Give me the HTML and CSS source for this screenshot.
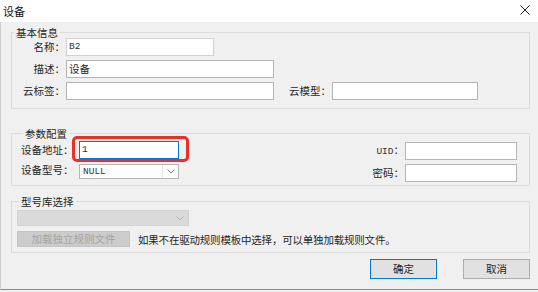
FILE: index.html
```html
<!DOCTYPE html>
<html>
<head>
<meta charset="utf-8">
<link rel="stylesheet" href="styles.css">
</head>
<body>
<div class="window">
  <div class="titlebar">
    <span class="title">设备</span>
    <svg class="close" width="10" height="10" viewBox="0 0 10 10"><path d="M0.5 0.5L9.5 9.5M9.5 0.5L0.5 9.5" stroke="#222" stroke-width="1" fill="none"/></svg>
  </div>
  <div class="content">
    <fieldset class="group g1">
      <legend>基本信息</legend>
      <div class="row">
        <label class="lab l1">名称：</label>
        <div class="input w148 dim"><span class="mono">B2</span></div>
      </div>
      <div class="row">
        <label class="lab l1">描述：</label>
        <div class="input w208">设备</div>
      </div>
      <div class="row">
        <label class="lab l1">云标签：</label>
        <div class="input w208"></div>
        <label class="lab l1b">云模型：</label>
        <div class="input w146"></div>
      </div>
    </fieldset>

    <fieldset class="group g2">
      <legend>参数配置</legend>
      <div class="cols">
        <div class="col left">
          <div class="row">
            <label class="lab l2">设备地址：</label>
            <div class="hl-wrap">
              <div class="input w100 focus"><span class="mono">1</span></div>
              <div class="highlight"></div>
            </div>
          </div>
          <div class="row r2">
            <label class="lab l2">设备型号：</label>
            <div class="select w100"><span class="mono">NULL</span>
              <span class="arrow"><svg width="8" height="5" viewBox="0 0 8 5"><path d="M0.5 0.5L4 4L7.5 0.5" stroke="#777" fill="none"/></svg></span>
            </div>
          </div>
        </div>
        <div class="col right">
          <div class="row">
            <label class="lab l3"><span class="mono">UID</span>：</label>
            <div class="input w112"></div>
          </div>
          <div class="row r2b">
            <label class="lab l3">密码：</label>
            <div class="input w112"></div>
          </div>
        </div>
      </div>
    </fieldset>

    <fieldset class="group g3">
      <legend>型号库选择</legend>
      <div class="select disabled w172">
        <span class="arrow"><svg width="8" height="5" viewBox="0 0 8 5"><path d="M0.5 0.5L4 4L7.5 0.5" stroke="#b5b5b5" fill="none"/></svg></span>
      </div>
      <div class="row r3">
        <div class="btn disabled-btn">加载独立规则文件</div>
        <span class="hint">如果不在驱动规则模板中选择，可以单独加载规则文件。</span>
      </div>
    </fieldset>

    <div class="footer">
      <div class="btn primary">确定</div>
      <div class="btn normal">取消</div>
    </div>
  </div>
</div>
</body>
</html>
```

FILE: styles.css
```css
* { box-sizing: border-box; }
html, body { margin: 0; padding: 0; }
body {
  width: 538px;
  height: 292px;
  background: #f0f0f0;
  font-family: "Noto Sans CJK SC", "Noto Sans", sans-serif;
  font-size: 10.5px;
  color: #262626;
  overflow: hidden;
}
.window {
  width: 538px;
  height: 292px;
  display: flex;
  flex-direction: column;
}
.titlebar {
  height: 22px;
  background: #ffffff;
  display: flex;
  align-items: center;
  justify-content: space-between;
  padding: 0 8px 1px 3px;
  flex: none;
}
.title { font-size: 11px; line-height: 12px; color: #111; }
.close { display: block; margin-top: -2px; }
.content {
  flex: 1;
  border-left: 1px solid #cfcfcf;
  border-bottom: 1px solid #8a8a8a;
  margin-bottom: 2px;
  padding: 0 8px 0 10px;
  display: flex;
  flex-direction: column;
}
.group {
  margin: 0;
  border: 1px solid #dcdcdc;
  padding: 0;
  min-width: 0;
}
.group legend {
  font-size: 10.5px;
  line-height: 11px;
  padding: 0 2px;
  margin-left: 2px;
}
.g1 { margin-top: 5px; padding: 0 0 8px 0; }
.g2 { margin-top: 19px; padding: 2px 12px 3px 9px; }
.g3 { margin-top: 10px; padding: 3px 0 5px 5px; }
.row {
  display: flex;
  align-items: center;
  height: 18px;
}
.g1 .row + .row { margin-top: 4px; }
.lab { white-space: nowrap; line-height: 12px; }
.l1 { width: 53px; text-align: right; margin-right: 1px; }
.l1b { width: 57px; text-align: right; margin-right: 1px; }
.l2 { width: 58px; }
.l3 { width: 42px; text-align: right; margin-right: 1px; }
.input {
  height: 18px;
  background: #fff;
  border: 1px solid #b5b5b5;
  padding: 0 2px;
  display: flex;
  align-items: center;
  line-height: 12px;
}
.input.dim { border-color: #d2d2d2; }
.input.focus { border-color: #0078d7; }
.mono { font-family: "Liberation Mono", "DejaVu Sans Mono", monospace; font-size: 9.5px; font-weight: normal; color: #333; }
.w100 { width: 100px; }
.w112 { width: 112px; }
.w146 { width: 146px; }
.w148 { width: 148px; }
.w172 { width: 172px; }
.w208 { width: 208px; }
.cols { display: flex; justify-content: space-between; }
.r2 { margin-top: 5px; align-items: flex-start; }
.r2b { margin-top: 4px; }
.right .row:first-child { margin-top: 1px; }
.hl-wrap { position: relative; }
.highlight {
  position: absolute;
  left: -7px;
  right: -10px;
  top: -5px;
  bottom: -3px;
  border: 3px solid #e8302a;
  border-radius: 5px;
}
.select {
  height: 15px;
  background: #fff;
  border: 1px solid #b5b5b5;
  display: flex;
  align-items: center;
  padding-left: 3px;
}
.select .arrow {
  margin-left: auto;
  width: 16px;
  height: 13px;
  display: flex;
  align-items: center;
  justify-content: center;
  border-left: 1px solid #e6e6e6;
}
.select.disabled {
  height: 16px;
  background: #dadada;
  border-color: #d2d2d2;
}
.select.disabled .arrow { border-left: none; }
.r3 { margin-top: 5px; height: 16px; }
.btn {
  display: flex;
  align-items: center;
  justify-content: center;
  line-height: 12px;
  white-space: nowrap;
}
.disabled-btn {
  width: 113px;
  height: 16px;
  background: #cccccc;
  border: 1px solid #c4c4c4;
  color: #a3a3a3;
}
.hint { margin-left: 8px; white-space: nowrap; letter-spacing: -0.2px; }
.footer {
  display: flex;
  justify-content: flex-end;
  gap: 26px;
  margin-top: 6px;
}
.footer .btn {
  width: 67px;
  height: 20px;
  background: #e1e1e1;
}
.primary { border: 1px solid #0078d7; }
.normal { border: 1px solid #adadad; }
```
